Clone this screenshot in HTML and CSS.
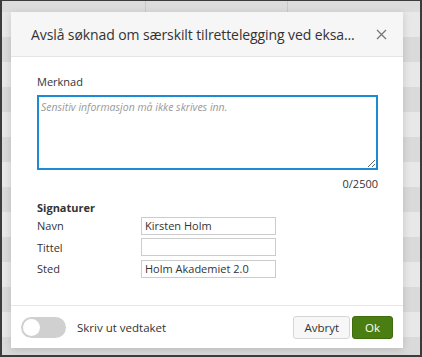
FILE: index.html
```html
<!DOCTYPE html>
<html lang="nb">
<head>
  <meta charset="UTF-8">
  <meta name="viewport" content="width=device-width, initial-scale=1.0">
  <title>Avslå søknad</title>
  <link rel="stylesheet" href="styles.css">
</head>
<body>
  <div class="screen">
    <div class="backdrop">
      <div class="row"></div>
      <div class="row row-dark"></div>
      <div class="row"></div>
      <div class="row row-dark"></div>
      <div class="row"></div>
      <div class="row row-dark"></div>
      <div class="row"></div>
      <div class="row row-dark"></div>
      <div class="row"></div>
      <div class="row row-dark"></div>
      <div class="row"></div>
      <div class="row row-dark"></div>
      <div class="row"></div>
      <div class="row row-dark"></div>
    </div>

    <div class="modal">
      <header class="modal-header">
        <h1>Avslå søknad om særskilt tilrettelegging ved eksa...</h1>
        <button class="close" aria-label="Lukk">
          <svg width="11" height="11" viewBox="0 0 11 11"><path d="M1 1L10 10M10 1L1 10" stroke="#777" stroke-width="1.3" fill="none"/></svg>
        </button>
      </header>

      <div class="modal-body">
        <label class="field-label" for="merknad">Merknad</label>
        <textarea id="merknad" class="note" placeholder="Sensitiv informasjon må ikke skrives inn."></textarea>
        <div class="counter">0/2500</div>

        <h2>Signaturer</h2>
        <div class="sig-row">
          <span>Navn</span>
          <input type="text" value="Kirsten Holm">
        </div>
        <div class="sig-row">
          <span>Tittel</span>
          <input type="text" value="">
        </div>
        <div class="sig-row">
          <span>Sted</span>
          <input type="text" value="Holm Akademiet 2.0">
        </div>
      </div>

      <footer class="modal-footer">
        <div class="toggle-wrap">
          <span class="toggle"><span class="knob"></span></span>
          <span>Skriv ut vedtaket</span>
        </div>
        <div class="actions">
          <button class="btn">Avbryt</button>
          <button class="btn btn-ok">Ok</button>
        </div>
      </footer>
    </div>
  </div>
</body>
</html>
```

FILE: styles.css
```css
body {
  margin: 0;
  font-family: 'Open Sans', sans-serif;
  color: #333;
}
.screen {
  position: relative;
  width: 422px;
  height: 357px;
  box-sizing: border-box;
  border: 2px solid #3c3c3c;
  border-top-width: 1px;
  background: #dcdcdc;
  overflow: hidden;
}
.backdrop {
  padding-top: 11px;
  height: 100%;
  box-sizing: border-box;
  background-image:
    linear-gradient(#c9c9c9, #c9c9c9),
    linear-gradient(#c9c9c9, #c9c9c9);
  background-size: 1px 100%, 1px 100%;
  background-position: 143px 0, 285px 0;
  background-repeat: no-repeat;
}
.row {
  height: 25px;
  background: #e8e8e8;
}
.row-dark {
  background: #dadada;
}
.modal {
  position: absolute;
  left: 9px;
  top: 11px;
  width: 392px;
  height: 336px;
  background: white;
  box-shadow: 0 2px 8px rgba(0,0,0,0.15);
  display: flex;
  flex-direction: column;
}
.modal-header {
  height: 45px;
  box-sizing: border-box;
  background: #f6f6f6;
  border-bottom: 1px solid #e4e4e4;
  display: flex;
  align-items: center;
  justify-content: space-between;
  padding: 0 16px 0 20px;
}
.modal-header h1 {
  margin: 0;
  font-size: 14px;
  letter-spacing: -0.1px;
  font-weight: normal;
  color: #333;
  white-space: nowrap;
}
.close {
  border: none;
  background: none;
  padding: 0;
  display: flex;
}
.modal-body {
  flex: 1;
  padding: 16px 25px 0 26px;
  font-size: 11px;
}
.field-label {
  display: block;
  line-height: 17px;
  margin-bottom: 5px;
}
.note {
  display: block;
  width: 100%;
  height: 75px;
  box-sizing: border-box;
  border: 2px solid #1b8bd6;
  margin: 0;
  padding: 3px 2px;
  font-family: 'Open Sans', sans-serif;
  font-size: 10.5px;
  resize: vertical;
}
.note::placeholder {
  color: #999;
  font-style: italic;
}
.counter {
  text-align: right;
  line-height: 17px;
  margin-top: 5px;
}
h2 {
  margin: 8px 0 0;
  font-size: 11px;
  font-weight: bold;
  line-height: 15px;
}
.sig-row {
  display: flex;
  align-items: center;
  height: 21.5px;
}
.sig-row span {
  width: 104px;
}
.sig-row input {
  width: 135px;
  height: 18px;
  box-sizing: border-box;
  border: 1px solid #ccc;
  padding: 0 3px;
  font-family: 'Open Sans', sans-serif;
  font-size: 11px;
  color: #333;
}
.modal-footer {
  height: 43px;
  box-sizing: border-box;
  border-top: 1px solid #e6e6e6;
  display: flex;
  align-items: center;
  justify-content: space-between;
  padding: 0 10px;
  font-size: 11.5px;
}
.toggle-wrap {
  display: flex;
  align-items: center;
  gap: 11px;
}
.toggle {
  width: 45px;
  height: 21px;
  border-radius: 11px;
  background: #d0d0d0;
  display: flex;
  align-items: center;
  padding: 0 2px;
  box-sizing: border-box;
}
.knob {
  width: 17px;
  height: 17px;
  border-radius: 50%;
  background: white;
}
.actions {
  display: flex;
  gap: 2px;
}
.btn {
  height: 23px;
  padding: 0 10px;
  border: 1px solid #d6d6d6;
  border-radius: 3px;
  background: #f7f7f7;
  font-family: 'Open Sans', sans-serif;
  font-size: 11.5px;
  color: #333;
}
.btn-ok {
  background: #4b7e12;
  border-color: #3f6c0c;
  color: white;
  padding: 0 12px;
}
```
